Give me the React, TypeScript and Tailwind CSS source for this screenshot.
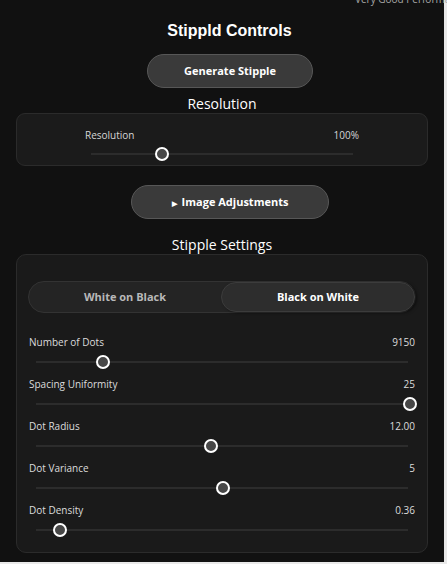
import React from "react";

type SliderRow = {
  label: string;
  value: string;
  pos: number; // thumb centre, px from track start
};

const sliders: SliderRow[] = [
  { label: "Number of Dots", value: "9150", pos: 67 },
  { label: "Spacing Uniformity", value: "25", pos: 374 },
  { label: "Dot Radius", value: "12.00", pos: 175 },
  { label: "Dot Variance", value: "5", pos: 187 },
  { label: "Dot Density", value: "0.36", pos: 24 },
];

const font = { fontFamily: "'Open Sans', 'Noto Sans', sans-serif" };

function Track({ pos }: { pos: number }) {
  return (
    <div className="relative h-[14px]">
      <div className="absolute left-0 right-0 top-[6px] h-[2px] bg-[#2c2c2c]" />
      <div
        className="absolute top-0 h-[14px] w-[14px] rounded-full border-2 border-white bg-[#474747]"
        style={{ left: pos - 7 }}
      />
    </div>
  );
}

export default function App() {
  return (
    <div className="relative h-[564px] w-[447px] overflow-hidden bg-[#e9e9e9]" style={font}>
      <div className="h-[562px] w-[444px] bg-[#111111]">
        <h1
          className="ml-[15px] pt-[21px] text-center text-[16px] font-bold leading-5 text-white"
          style={{ fontFamily: "'Liberation Sans', Arial, sans-serif" }}
        >
          Stippld Controls
        </h1>

        <div className="ml-[16px] mt-[13px] flex justify-center">
          <button className="h-[34px] w-[166px] rounded-full border border-[#575757] bg-[#3a3a3a] text-[11px] font-bold text-white">
            Generate Stipple
          </button>
        </div>

        <h2 className="mt-[7px] text-center text-[14px] font-medium leading-[18px] text-white">
          Resolution
        </h2>

        <div className="mx-[16px] mt-0 h-[53px] rounded-[9px] border border-[#2b2b2b] bg-[#1b1b1b] px-[67px] pt-[14px]">
          <div className="flex justify-between px-[1px] text-[10px] leading-[14px] text-[#d6d6d6]">
            <span>Resolution</span>
            <span>100%</span>
          </div>
          <div className="mx-[7px] mt-[5px]">
            <Track pos={71} />
          </div>
        </div>

        <div className="ml-[16px] mt-[19px] flex justify-center">
          <button className="h-[34px] w-[198px] rounded-full border border-[#575757] bg-[#3a3a3a] text-[11px] font-bold text-white">
            <span className="mr-[5px] text-[7px]">▶</span>Image Adjustments
          </button>
        </div>

        <h2 className="mt-[17px] text-center text-[14px] font-medium leading-[18px] text-white">
          Stipple Settings
        </h2>

        <div className="mx-[16px] mt-0 h-[299px] rounded-[10px] border border-[#2b2b2b] bg-[#1a1a1a] px-[11px] pt-[26px]">
          <div className="flex h-[32px] rounded-full border border-[#333333] bg-[#242424] text-[11px] font-bold">
            <div className="flex flex-1 items-center justify-center text-[#b8b8b8]">White on Black</div>
            <div className="flex flex-1 items-center justify-center rounded-full border border-[#3c3c3c] bg-[#2d2d2d] text-white shadow-[2px_1px_3px_rgba(0,0,0,0.5)]">
              Black on White
            </div>
          </div>

          <div className="mt-[22px] flex flex-col gap-[8px]">
            {sliders.map((s) => (
              <div key={s.label}>
                <div className="flex justify-between px-[1px] text-[10px] leading-[14px] text-[#dcdcdc]">
                  <span>{s.label}</span>
                  <span>{s.value}</span>
                </div>
                <div className="mx-[8px] mt-[6px]">
                  <Track pos={s.pos} />
                </div>
              </div>
            ))}
          </div>
        </div>
      </div>

      <span className="absolute left-[355px] top-[-8px] whitespace-nowrap text-[10px] text-[#a8a8a8]">
        Very Good Performance
      </span>
    </div>
  );
}
